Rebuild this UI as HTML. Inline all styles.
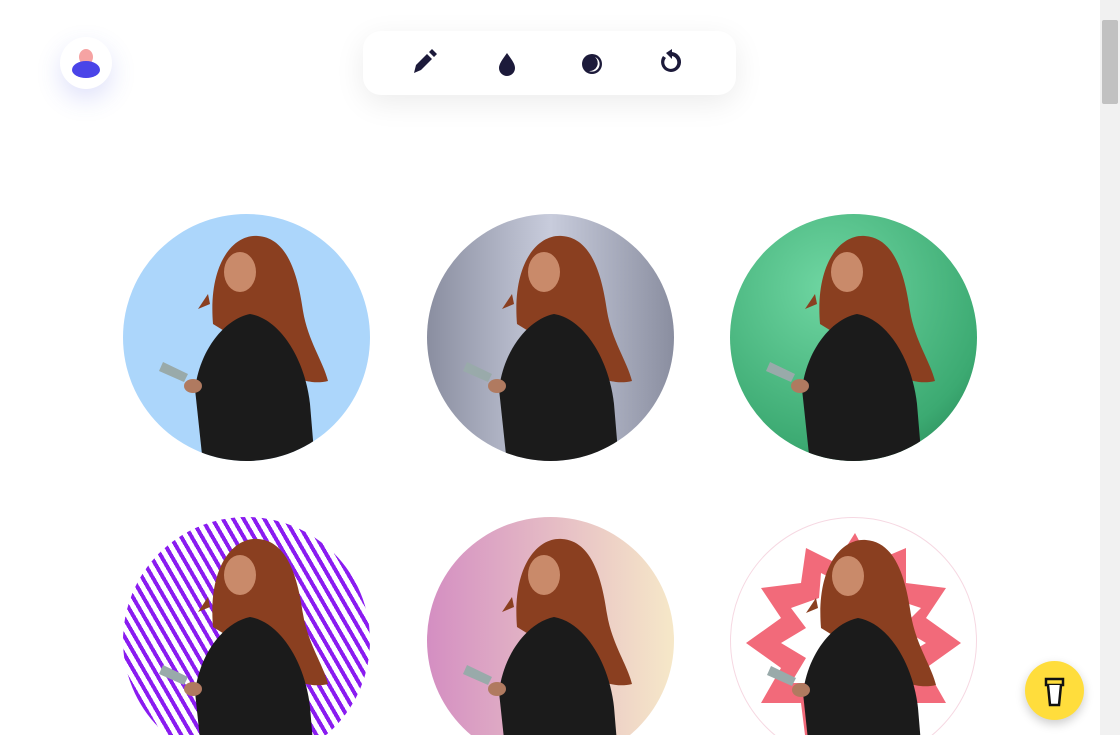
<!DOCTYPE html>
<html><head><style>
html,body{margin:0;width:1120px;height:735px;overflow:hidden;background:#fff;font-family:"Liberation Sans",sans-serif;position:relative}
.av{position:absolute;left:60px;top:37px;width:52px;height:52px;border-radius:50%;background:#fff;box-shadow:0 10px 25px rgba(80,90,230,.18)}
.bar{position:absolute;left:363px;top:31px;width:373px;height:64px;border-radius:18px;background:#fff;box-shadow:0 8px 30px rgba(0,0,0,.08)}
.c{position:absolute;width:247px;height:247px;border-radius:50%;overflow:hidden}
.sb{position:absolute;right:0;top:0;width:20px;height:735px;background:#f1f1f1}
.th{position:absolute;left:2px;top:20px;width:16px;height:84px;background:#c1c1c1;border-radius:2px}
.cup{position:absolute;left:1025px;top:661px;width:59px;height:59px;border-radius:50%;background:#ffdd3c;box-shadow:0 4px 10px rgba(0,0,0,.2)}
</style></head><body>
<div class="av"><svg width="52" height="52"><ellipse cx="26" cy="20" rx="7" ry="8" fill="#f6a3a3"/><path d="M12 33a14 9 0 0 1 28 0a14 8 0 0 1-28 0z" fill="#4a44e8"/></svg></div>
<div class="bar"><svg width="373" height="64" fill="#1c1a3a">
<path d="M51 42l2-8 11-11 5 5-11 11z M66 21l3-3 5 5-3 3z"/>
<path d="M144 22c-5 7-8 11-8 15a8 8 0 0 0 16 0c0-4-3-8-8-15z"/>
<circle cx="229" cy="33" r="10"/><path d="M232 26a7.5 7.5 0 0 1-6 14a8 8 0 0 0 6-14z" fill="#fff"/>
<path d="M303 22l6-4v3a10 10 0 1 1-9 4l3 2a6.5 6.5 0 1 0 6-2v3z"/>
</svg></div>
<svg width="0" height="0" style="position:absolute"><defs>
<g id="p"><path d="M90 110c-5-60 20-90 45-88 30 2 40 40 45 75 5 30 20 50 25 70-20 5-40-5-55-20z" fill="#8a3f20"/><path d="M85 80l-10 15 12 -5z" fill="#8a3f20"/><ellipse cx="117" cy="58" rx="16" ry="20" fill="#c98a6a"/><path d="M72 175c5-40 30-70 55-75 30 5 55 45 60 90l5 60H80z" fill="#1b1b1b"/><path d="M40 148l25 12-4 8-25-11z" fill="#9aa"/><ellipse cx="70" cy="172" rx="9" ry="7" fill="#b07a60"/></g>
</defs></svg>
<div class="c" style="left:123px;top:214px;background:#acd6fb"><svg width="247" height="247"><use href="#p"/></svg></div>
<div class="c" style="left:427px;top:214px;background:linear-gradient(90deg,#8a8ea0,#c8ccdc 50%,#8a8ea0)"><svg width="247" height="247"><use href="#p"/></svg></div>
<div class="c" style="left:730px;top:214px;background:radial-gradient(circle at 40% 30%,#6fd6a2,#3caa72 70%,#1f7a4c)"><svg width="247" height="247"><use href="#p"/></svg></div>
<div class="c" style="left:123px;top:517px;background:repeating-linear-gradient(60deg,#8a1cf0 0 4px,#fff 4px 9px)"><svg width="247" height="247"><use href="#p"/></svg></div>
<div class="c" style="left:427px;top:517px;background:linear-gradient(90deg,#d48ec2,#f6e8c8)"><svg width="247" height="247"><use href="#p"/></svg></div>
<div class="c" style="left:730px;top:517px;background:#fff;border:1px solid #f6d8e2;box-sizing:border-box"><svg width="247" height="247"><polygon points="124,15 140,45 175,30 175,65 215,70 195,100 230,125 195,150 215,185 175,185 170,220 140,200 124,240 105,205 75,225 70,185 30,185 50,150 15,125 50,100 30,70 70,65 75,30 105,45" fill="#f26a7a"/><polygon points="124,45 135,65 160,55 160,80 190,90 170,110 195,125 170,140 185,165 160,165 155,190 135,175 124,205 110,178 90,190 88,165 60,165 75,140 50,125 75,110 60,90 88,80 90,55 110,65" fill="#fff"/><use href="#p"/></svg></div>
<div class="cup"><svg width="59" height="59" fill="none" stroke="#111" stroke-width="2.5"><path d="M21 18h17v6H21z"/><path d="M23 24l2 20h9l2-20" fill="#fff"/></svg></div>
<div class="sb"><div class="th"></div></div>
</body></html>
